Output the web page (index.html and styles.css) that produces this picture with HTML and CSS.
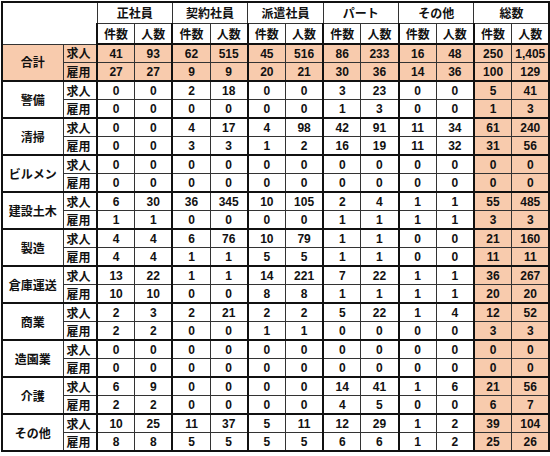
FILE: index.html
```html
<!DOCTYPE html>
<html lang="ja">
<head>
<meta charset="utf-8">
<link rel="stylesheet" href="styles.css">
</head>
<body>
<table class="stats">
  <colgroup>
    <col class="c-label"><col class="c-kind">
    <col class="c-num"><col class="c-num"><col class="c-num"><col class="c-num">
    <col class="c-num"><col class="c-num"><col class="c-num"><col class="c-num">
    <col class="c-num"><col class="c-num"><col class="c-num"><col class="c-num">
  </colgroup>
  <thead>
    <tr class="h1">
      <th class="corner" colspan="2" rowspan="2"></th>
      <th colspan="2" class="grp">正社員</th>
      <th colspan="2" class="grp">契約社員</th>
      <th colspan="2" class="grp">派遣社員</th>
      <th colspan="2" class="grp">パート</th>
      <th colspan="2" class="grp">その他</th>
      <th colspan="2" class="grp">総数</th>
    </tr>
    <tr class="h2">
      <th class="l">件数</th><th class="r">人数</th>
      <th class="l">件数</th><th class="r">人数</th>
      <th class="l">件数</th><th class="r">人数</th>
      <th class="l">件数</th><th class="r">人数</th>
      <th class="l">件数</th><th class="r">人数</th>
      <th class="l">件数</th><th class="r">人数</th>
    </tr>
  </thead>
  <tbody class="grand">
    <tr class="top"><th rowspan="2" class="cat">合計</th><th class="kind">求人</th>
      <td class="l">41</td><td class="r">93</td><td class="l">62</td><td class="r">515</td><td class="l">45</td><td class="r">516</td><td class="l">86</td><td class="r">233</td><td class="l">16</td><td class="r">48</td><td class="l">250</td><td class="r">1,405</td></tr>
    <tr class="bot"><th class="kind">雇用</th>
      <td class="l">27</td><td class="r">27</td><td class="l">9</td><td class="r">9</td><td class="l">20</td><td class="r">21</td><td class="l">30</td><td class="r">36</td><td class="l">14</td><td class="r">36</td><td class="l">100</td><td class="r">129</td></tr>
  </tbody>
  <tbody>
    <tr class="top"><th rowspan="2" class="cat">警備</th><th class="kind">求人</th>
      <td class="l">0</td><td class="r">0</td><td class="l">2</td><td class="r">18</td><td class="l">0</td><td class="r">0</td><td class="l">3</td><td class="r">23</td><td class="l">0</td><td class="r">0</td><td class="l t">5</td><td class="r t">41</td></tr>
    <tr class="bot"><th class="kind">雇用</th>
      <td class="l">0</td><td class="r">0</td><td class="l">0</td><td class="r">0</td><td class="l">0</td><td class="r">0</td><td class="l">1</td><td class="r">3</td><td class="l">0</td><td class="r">0</td><td class="l t">1</td><td class="r t">3</td></tr>
  </tbody>
  <tbody>
    <tr class="top"><th rowspan="2" class="cat">清掃</th><th class="kind">求人</th>
      <td class="l">0</td><td class="r">0</td><td class="l">4</td><td class="r">17</td><td class="l">4</td><td class="r">98</td><td class="l">42</td><td class="r">91</td><td class="l">11</td><td class="r">34</td><td class="l t">61</td><td class="r t">240</td></tr>
    <tr class="bot"><th class="kind">雇用</th>
      <td class="l">0</td><td class="r">0</td><td class="l">3</td><td class="r">3</td><td class="l">1</td><td class="r">2</td><td class="l">16</td><td class="r">19</td><td class="l">11</td><td class="r">32</td><td class="l t">31</td><td class="r t">56</td></tr>
  </tbody>
  <tbody>
    <tr class="top"><th rowspan="2" class="cat">ビルメン</th><th class="kind">求人</th>
      <td class="l">0</td><td class="r">0</td><td class="l">0</td><td class="r">0</td><td class="l">0</td><td class="r">0</td><td class="l">0</td><td class="r">0</td><td class="l">0</td><td class="r">0</td><td class="l t">0</td><td class="r t">0</td></tr>
    <tr class="bot"><th class="kind">雇用</th>
      <td class="l">0</td><td class="r">0</td><td class="l">0</td><td class="r">0</td><td class="l">0</td><td class="r">0</td><td class="l">0</td><td class="r">0</td><td class="l">0</td><td class="r">0</td><td class="l t">0</td><td class="r t">0</td></tr>
  </tbody>
  <tbody>
    <tr class="top"><th rowspan="2" class="cat">建設土木</th><th class="kind">求人</th>
      <td class="l">6</td><td class="r">30</td><td class="l">36</td><td class="r">345</td><td class="l">10</td><td class="r">105</td><td class="l">2</td><td class="r">4</td><td class="l">1</td><td class="r">1</td><td class="l t">55</td><td class="r t">485</td></tr>
    <tr class="bot"><th class="kind">雇用</th>
      <td class="l">1</td><td class="r">1</td><td class="l">0</td><td class="r">0</td><td class="l">0</td><td class="r">0</td><td class="l">1</td><td class="r">1</td><td class="l">1</td><td class="r">1</td><td class="l t">3</td><td class="r t">3</td></tr>
  </tbody>
  <tbody>
    <tr class="top"><th rowspan="2" class="cat">製造</th><th class="kind">求人</th>
      <td class="l">4</td><td class="r">4</td><td class="l">6</td><td class="r">76</td><td class="l">10</td><td class="r">79</td><td class="l">1</td><td class="r">1</td><td class="l">0</td><td class="r">0</td><td class="l t">21</td><td class="r t">160</td></tr>
    <tr class="bot"><th class="kind">雇用</th>
      <td class="l">4</td><td class="r">4</td><td class="l">1</td><td class="r">1</td><td class="l">5</td><td class="r">5</td><td class="l">1</td><td class="r">1</td><td class="l">0</td><td class="r">0</td><td class="l t">11</td><td class="r t">11</td></tr>
  </tbody>
  <tbody>
    <tr class="top"><th rowspan="2" class="cat">倉庫運送</th><th class="kind">求人</th>
      <td class="l">13</td><td class="r">22</td><td class="l">1</td><td class="r">1</td><td class="l">14</td><td class="r">221</td><td class="l">7</td><td class="r">22</td><td class="l">1</td><td class="r">1</td><td class="l t">36</td><td class="r t">267</td></tr>
    <tr class="bot"><th class="kind">雇用</th>
      <td class="l">10</td><td class="r">10</td><td class="l">0</td><td class="r">0</td><td class="l">8</td><td class="r">8</td><td class="l">1</td><td class="r">1</td><td class="l">1</td><td class="r">1</td><td class="l t">20</td><td class="r t">20</td></tr>
  </tbody>
  <tbody>
    <tr class="top"><th rowspan="2" class="cat">商業</th><th class="kind">求人</th>
      <td class="l">2</td><td class="r">3</td><td class="l">2</td><td class="r">21</td><td class="l">2</td><td class="r">2</td><td class="l">5</td><td class="r">22</td><td class="l">1</td><td class="r">4</td><td class="l t">12</td><td class="r t">52</td></tr>
    <tr class="bot"><th class="kind">雇用</th>
      <td class="l">2</td><td class="r">2</td><td class="l">0</td><td class="r">0</td><td class="l">1</td><td class="r">1</td><td class="l">0</td><td class="r">0</td><td class="l">0</td><td class="r">0</td><td class="l t">3</td><td class="r t">3</td></tr>
  </tbody>
  <tbody>
    <tr class="top"><th rowspan="2" class="cat">造園業</th><th class="kind">求人</th>
      <td class="l">0</td><td class="r">0</td><td class="l">0</td><td class="r">0</td><td class="l">0</td><td class="r">0</td><td class="l">0</td><td class="r">0</td><td class="l">0</td><td class="r">0</td><td class="l t">0</td><td class="r t">0</td></tr>
    <tr class="bot"><th class="kind">雇用</th>
      <td class="l">0</td><td class="r">0</td><td class="l">0</td><td class="r">0</td><td class="l">0</td><td class="r">0</td><td class="l">0</td><td class="r">0</td><td class="l">0</td><td class="r">0</td><td class="l t">0</td><td class="r t">0</td></tr>
  </tbody>
  <tbody>
    <tr class="top"><th rowspan="2" class="cat">介護</th><th class="kind">求人</th>
      <td class="l">6</td><td class="r">9</td><td class="l">0</td><td class="r">0</td><td class="l">0</td><td class="r">0</td><td class="l">14</td><td class="r">41</td><td class="l">1</td><td class="r">6</td><td class="l t">21</td><td class="r t">56</td></tr>
    <tr class="bot"><th class="kind">雇用</th>
      <td class="l">2</td><td class="r">2</td><td class="l">0</td><td class="r">0</td><td class="l">0</td><td class="r">0</td><td class="l">4</td><td class="r">5</td><td class="l">0</td><td class="r">0</td><td class="l t">6</td><td class="r t">7</td></tr>
  </tbody>
  <tbody>
    <tr class="top"><th rowspan="2" class="cat">その他</th><th class="kind">求人</th>
      <td class="l">10</td><td class="r">25</td><td class="l">11</td><td class="r">37</td><td class="l">5</td><td class="r">11</td><td class="l">12</td><td class="r">29</td><td class="l">1</td><td class="r">2</td><td class="l t">39</td><td class="r t">104</td></tr>
    <tr class="bot"><th class="kind">雇用</th>
      <td class="l">8</td><td class="r">8</td><td class="l">5</td><td class="r">5</td><td class="l">5</td><td class="r">5</td><td class="l">6</td><td class="r">6</td><td class="l">1</td><td class="r">2</td><td class="l t">25</td><td class="r t">26</td></tr>
  </tbody>
</table>
</body>
</html>
```
FILE: styles.css
```css
html, body {
  margin: 0;
  padding: 0;
  background: #fff;
}
body {
  padding: 1px 0 0 1px;
}
.stats {
  border-collapse: collapse;
  table-layout: fixed;
  width: 548px;
  border: 2px solid #111;
  font-family: "Liberation Sans", "Noto Sans CJK JP", sans-serif;
  font-size: 12px;
  color: #111;
}
.c-label { width: 61px; }
.c-kind { width: 34px; }
.c-num { width: 37.7px; }

.stats th, .stats td {
  padding: 0;
  text-align: center;
  vertical-align: middle;
  border: 1px solid #333;
  line-height: 14px;
  white-space: nowrap;
  overflow: hidden;
}
.stats td {
  font-weight: bold;
  font-family: "Liberation Sans", sans-serif;
}
.stats th {
  font-family: "Noto Sans CJK JP", sans-serif;
  font-weight: bold;
  font-size: 12px;
}
.h1 th { height: 20px; }
.h2 th { height: 19px; border-bottom: 2px solid #111; }
.grp { border-left: 2px solid #111; border-right: 2px solid #111; }
.corner { border-right: 2px solid #111; border-bottom: 2px solid #111; }

.stats .l { border-left: 2px solid #111; }
.stats .r { border-right: 2px solid #111; }

tbody tr.top > * { height: 17px; }
tbody tr.bot > * { height: 17px; }
tbody tr.bot > *, tbody .cat { border-bottom: 2px solid #111; }

.kind {
  text-align: left !important;
  padding-left: 3px !important;
  border-right: 2px solid #111 !important;
}

.grand th, .grand td { background: #f8cbad; }
.stats td.t { background: #f8cbad; }
```
